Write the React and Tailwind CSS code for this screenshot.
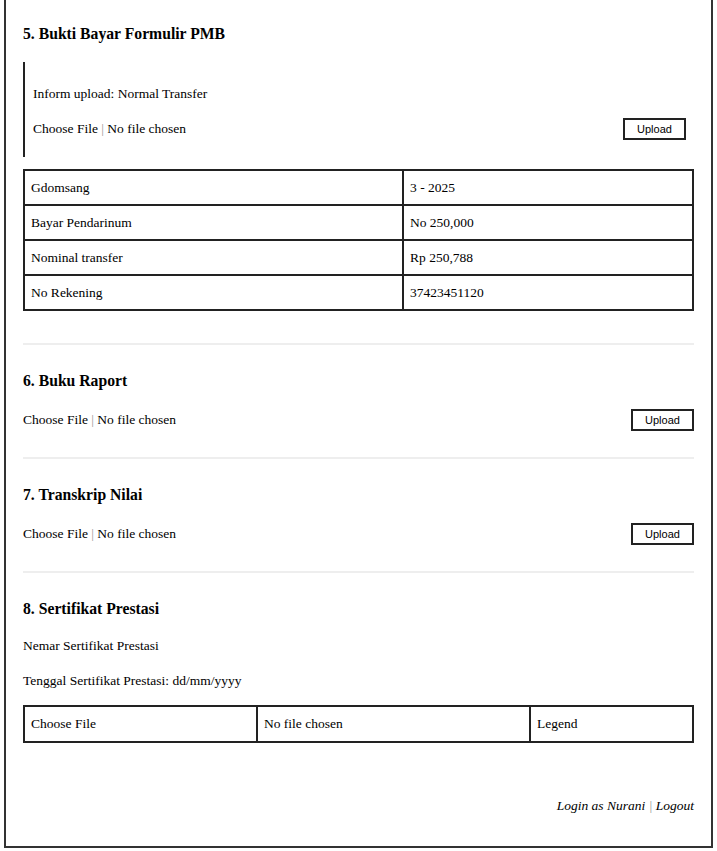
import React from 'react';

const serif = { fontFamily: '"Liberation Serif", "Times New Roman", serif' };

function UploadButton() {
  return (
    <button
      className="h-[22px] w-[63px] border-2 border-[#222] bg-white text-[11px] leading-none text-black"
      style={{ fontFamily: '"Liberation Sans", Arial, sans-serif' }}
    >
      Upload
    </button>
  );
}

function FileText() {
  return (
    <span>
      Choose File <span className="text-[#999]">|</span> No file chosen
    </span>
  );
}

function UploadSection({ title }) {
  return (
    <div className="border-t-2 border-[#eee] pt-[26px] pb-[26px]">
      <h3 className="h-[20px] text-[15.7px] font-bold leading-[20px]">{title}</h3>
      <div className="mt-[18px] flex h-[22px] items-center justify-between">
        <FileText />
        <UploadButton />
      </div>
    </div>
  );
}

const payment = [
  ['Gdomsang', '3 - 2025'],
  ['Bayar Pendarinum', 'No 250,000'],
  ['Nominal transfer', 'Rp 250,788'],
  ['No Rekening', '37423451120'],
];

export default function App() {
  return (
    <div className="min-h-[851px] bg-white text-[13.5px] leading-[16px] text-black" style={serif}>
      <div className="mx-[4px] h-[848px] border-x-2 border-b-2 border-[#333] px-[17px] pt-[24px]">
        <h3 className="h-[20px] text-[15.7px] font-bold leading-[20px]">5. Bukti Bayar Formulir PMB</h3>

        <div className="mt-[18px] h-[95px] border-l-2 border-[#222] pl-[8px] pr-[8px] pt-[24px]">
          <p>Inform upload: Normal Transfer</p>
          <div className="mt-[16px] flex h-[22px] items-center justify-between">
            <FileText />
            <UploadButton />
          </div>
        </div>

        <table className="mt-[12px] w-full border-collapse border-2 border-[#222]">
          <tbody>
            {payment.map(([k, v]) => (
              <tr key={k} className="h-[35px]">
                <td className="w-[379px] border-2 border-[#222] px-[6px]">{k}</td>
                <td className="border-2 border-[#222] px-[6px]">{v}</td>
              </tr>
            ))}
          </tbody>
        </table>

        <div className="mt-[32px]">
          <UploadSection title="6. Buku Raport" />
          <UploadSection title="7. Transkrip Nilai" />

          <div className="border-t-2 border-[#eee] pt-[26px]">
            <h3 className="h-[20px] text-[15.7px] font-bold leading-[20px]">8. Sertifikat Prestasi</h3>
            <p className="mt-[19px]">Nemar Sertifikat Prestasi</p>
            <p className="mt-[19px]">Tenggal Sertifikat Prestasi: dd/mm/yyyy</p>
            <table className="mt-[16px] w-full border-collapse border-2 border-[#222]">
              <tbody>
                <tr className="h-[36px]">
                  <td className="w-[233px] border-2 border-[#222] px-[6px]">Choose File</td>
                  <td className="w-[273px] border-2 border-[#222] px-[6px]">No file chosen</td>
                  <td className="border-2 border-[#222] px-[6px]">Legend</td>
                </tr>
              </tbody>
            </table>
            <p className="mt-[55px] text-right italic">
              Login as Nurani <span className="text-[#999]">|</span> Logout
            </p>
          </div>
        </div>
      </div>
    </div>
  );
}
